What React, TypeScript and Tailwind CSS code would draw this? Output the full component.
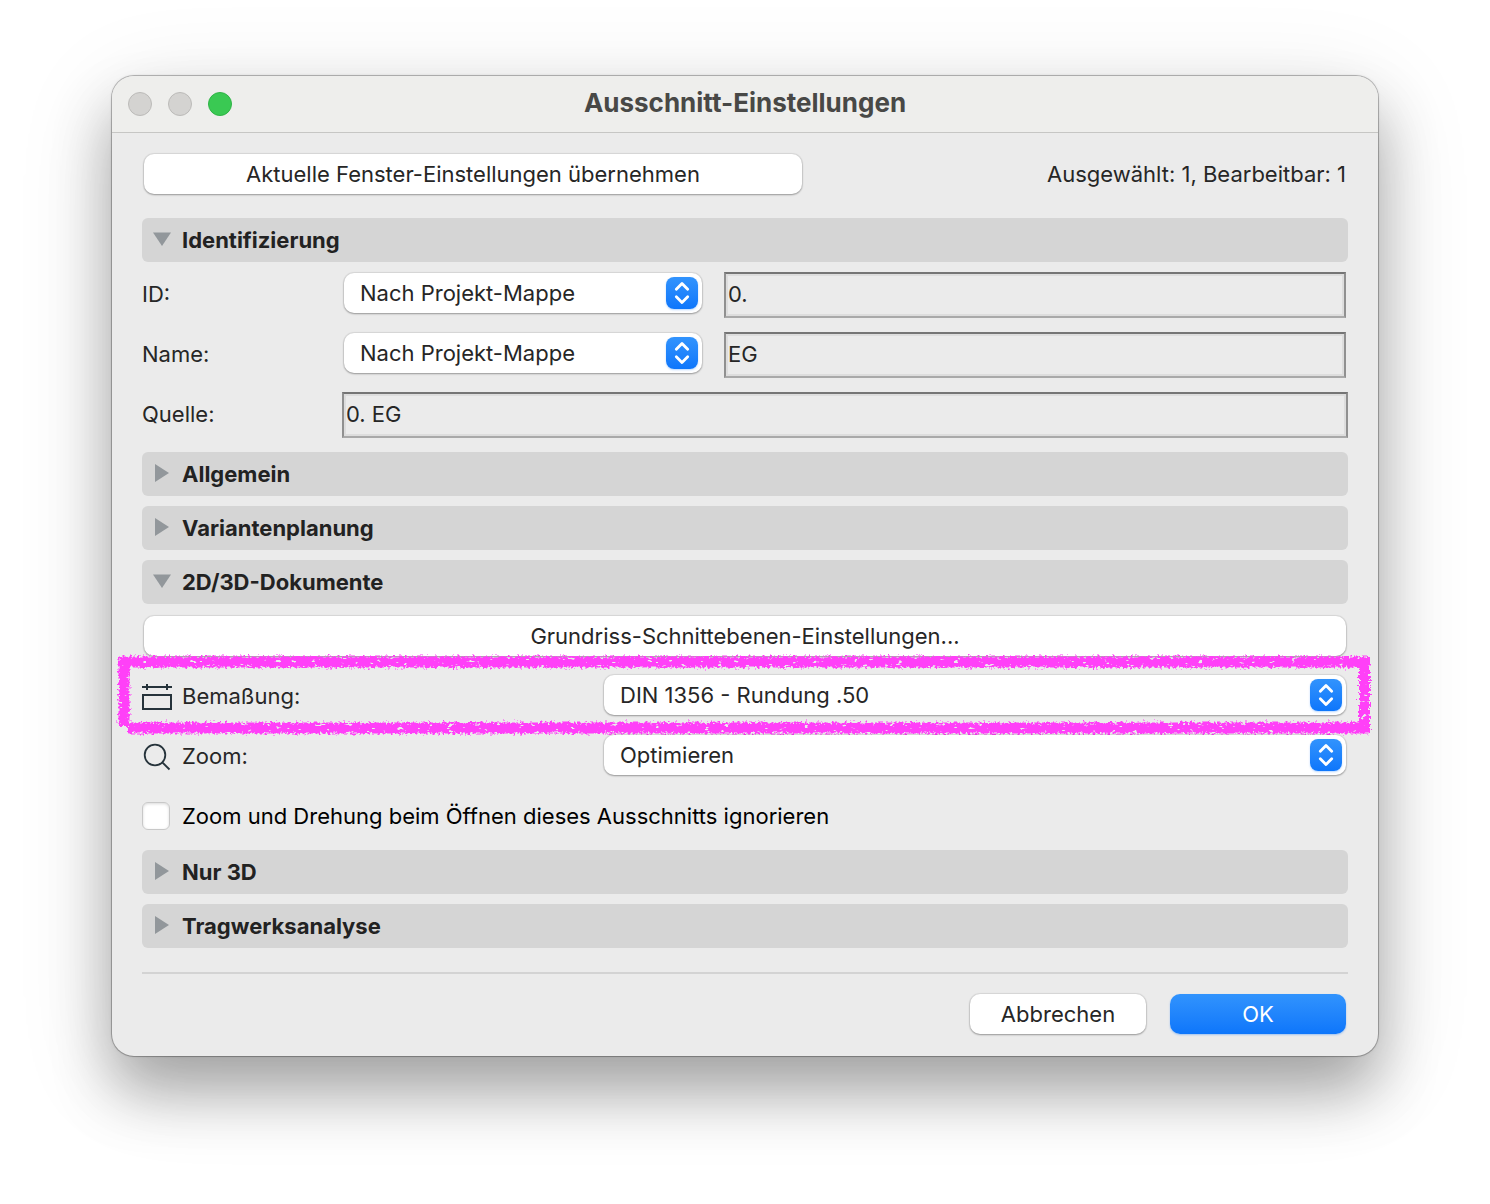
import { useState, type ReactNode } from "react";

interface PopupProps {
  id: string;
  label?: string;
  options: string[];
}

const Popup = ({ id, label, options }: PopupProps) => (
  <div className="relative mb-1 w-full">
    <select
      id={id}
      aria-label={label}
      className="block h-10 w-full appearance-none rounded-[10px] bg-white pr-12 pl-4 text-[22px] leading-7 text-[#262626] shadow-[0_0_1px_1px_rgba(0,0,0,0.08),0_1px_2px_rgba(0,0,0,0.3)]"
    >
      {options.map((option) => (
        <option key={option}>{option}</option>
      ))}
    </select>
    <span className="pointer-events-none absolute top-1 right-1 flex size-8 items-center justify-center rounded-lg bg-linear-to-b from-[#3193fd] to-[#0d76fb] shadow-[0_1px_2px_rgba(13,118,251,0.3)]">
      <svg
        className="size-8"
        viewBox="0 0 32 32"
        fill="none"
        stroke="white"
        strokeWidth="2.8"
        strokeLinecap="round"
        strokeLinejoin="round"
      >
        <path d="M10.3 12.3 16 6.5l5.7 5.8M10.3 19.7l5.7 5.8 5.7-5.8" />
      </svg>
    </span>
  </div>
);

interface FieldProps {
  id: string;
  label?: string;
  value: string;
}

const Field = ({ id, label, value }: FieldProps) => (
  <input
    id={id}
    aria-label={label}
    readOnly
    value={value}
    className="h-[46px] w-full border-2 border-t-[#757575] border-r-[#909090] border-b-[#a9a9a9] border-l-[#909090] bg-[#ebebeb] px-0.5 pb-0.5 text-[22px] leading-7 text-[#262626] shadow-[inset_0_0_0_2px_#dddddd] outline-none"
  />
);

interface SectionProps {
  title: string;
  defaultOpen?: boolean;
  children?: ReactNode;
}

const Section = ({ title, defaultOpen = false, children }: SectionProps) => {
  const [open, setOpen] = useState(defaultOpen);

  return (
    <section>
      <button
        type="button"
        aria-expanded={open}
        onClick={() => setOpen(!open)}
        className="flex h-11 w-full items-center gap-3 rounded-md bg-[#d5d5d5] pl-[10px] text-left text-[22px] leading-7 font-bold text-[#222222]"
      >
        <svg className="mb-0.5 h-5 w-[18px] overflow-visible" viewBox="0 0 18 20" fill="#92979b">
          {open ? <path d="M1 3.5h18L10 17z" /> : <path d="M3 1v18l14-9z" />}
        </svg>
        {title}
      </button>
      {open && children}
    </section>
  );
};

const whiteButton =
  "h-10 rounded-[10px] bg-white text-[22px] leading-7 text-[#262626] shadow-[0_0_1px_1px_rgba(0,0,0,0.08),0_1px_2px_rgba(0,0,0,0.3)]";

/* Marker frame around the dimension row */
const MarkerFrame = () => (
  <svg
    className="pointer-events-none absolute -top-5 -right-6 -bottom-4 -left-6 h-[82px] w-[calc(100%+48px)] overflow-visible"
    aria-hidden="true"
  >
    <defs>
      <filter
        id="crayon"
        filterUnits="userSpaceOnUse"
        x="-10"
        y="-10"
        width="110%"
        height="110"
        colorInterpolationFilters="sRGB"
      >
        <feTurbulence type="fractalNoise" baseFrequency="0.4" numOctaves="2" seed="7" result="noise" />
        <feDisplacementMap
          in="SourceGraphic"
          in2="noise"
          scale="8"
          xChannelSelector="R"
          yChannelSelector="G"
          result="rough"
        />
        <feTurbulence type="fractalNoise" baseFrequency="0.14 0.3" numOctaves="2" seed="3" />
        <feColorMatrix values="0 0 0 0 0  0 0 0 0 0  0 0 0 0 0  14 0 0 0 -3.4" result="grain" />
        <feComposite in="rough" in2="grain" operator="in" />
      </filter>
    </defs>
    <g filter="url(#crayon)" stroke="#ff40f8" strokeWidth="11">
      <line x1="1" y1="8" x2="99.7%" y2="8" />
      <line x1="6" y1="3" x2="6" y2="72" />
      <line x1="10" y1="74" x2="99.8%" y2="74" />
      <line x1="99.4%" y1="3" x2="99.4%" y2="79" />
    </g>
  </svg>
);

const App = () => {
  const [ignoreZoom, setIgnoreZoom] = useState(false);

  return (
    <main className="min-h-screen bg-white px-28 pt-[76px] pb-[148px] font-['Inter','Liberation_Sans',sans-serif] text-[22px] leading-7 text-[#262626]">
      <div className="rounded-[22px] bg-[#ebebeb] shadow-[0_0_0_1px_rgba(0,0,0,0.22),0_0_3px_rgba(0,0,0,0.2),0_20px_100px_rgba(0,0,0,0.12),0_36px_60px_rgba(0,0,0,0.3)]">
        <header className="grid h-[57px] grid-cols-[1fr_auto_1fr] items-center rounded-t-[22px] border-b border-[#c6c6c4] bg-[#eeeeec] px-4">
          <div className="flex gap-4">
            <button type="button" aria-label="Schließen" className="size-6 rounded-full border border-[#bcbbb9] bg-[#d4d3d1]" />
            <button type="button" aria-label="Minimieren" className="size-6 rounded-full border border-[#bcbbb9] bg-[#d4d3d1]" />
            <button type="button" aria-label="Zoomen" className="size-6 rounded-full border border-[#2fb446] bg-[#3ac953]" />
          </div>
          <h1 className="pb-0.5 text-[26px] leading-8 font-bold text-[#484846]">Ausschnitt-Einstellungen</h1>
        </header>

        <div className="px-[30px] pt-[21px] pb-[22px]">
          <div className="flex items-center justify-between px-0.5 pb-6">
            <button type="button" className={`${whiteButton} w-[658px]`}>
              Aktuelle Fenster-Einstellungen übernehmen
            </button>
            <p>Ausgewählt: 1, Bearbeitbar: 1</p>
          </div>

          <div className="flex flex-col gap-[10px]">
            <Section title="Identifizierung" defaultOpen>
              <div className="flex flex-col gap-[14px] pt-[10px] pb-1">
                <div className="flex items-center pr-0.5">
                  <label htmlFor="id-mode" className="w-[202px] shrink-0 pb-0.5">ID:</label>
                  <div className="mr-[22px] w-[358px] shrink-0">
                    <Popup id="id-mode" options={["Nach Projekt-Mappe", "Benutzerdefiniert"]} />
                  </div>
                  <Field id="id-value" label="ID" value="0." />
                </div>
                <div className="flex items-center pr-0.5">
                  <label htmlFor="name-mode" className="w-[202px] shrink-0 pb-0.5">Name:</label>
                  <div className="mr-[22px] w-[358px] shrink-0">
                    <Popup id="name-mode" options={["Nach Projekt-Mappe", "Benutzerdefiniert"]} />
                  </div>
                  <Field id="name-value" label="Name" value="EG" />
                </div>
                <div className="flex items-center">
                  <label htmlFor="source" className="w-[200px] shrink-0 pb-0.5">Quelle:</label>
                  <Field id="source" value="0. EG" />
                </div>
              </div>
            </Section>

            <Section title="Allgemein" />
            <Section title="Variantenplanung" />

            <Section title="2D/3D-Dokumente" defaultOpen>
              <div className="flex flex-col gap-[14px] pt-3">
                <div className="px-0.5 pb-1">
                  <button type="button" className={`${whiteButton} block w-full`}>
                    Grundriss-Schnittebenen-Einstellungen...
                  </button>
                </div>
                <div className="relative flex h-[46px] items-center pr-0.5">
                  <svg className="mr-[10px] size-[30px] shrink-0" viewBox="0 0 30 30" fill="none" stroke="#26333b" strokeWidth="2">
                    <path d="M0 5h30M5 2v6M25 2v6M1 13h28v14H1z" />
                  </svg>
                  <label htmlFor="dimension" className="w-[422px] shrink-0 pb-0.5">Bemaßung:</label>
                  <Popup id="dimension" options={["DIN 1356 - Rundung .50", "DIN 1356 - Rundung .25"]} />
                  <MarkerFrame />
                </div>
                <div className="flex h-[46px] items-center pr-0.5">
                  <svg className="mr-[10px] size-[30px] shrink-0" viewBox="0 0 30 30" fill="none" stroke="#26333b" strokeWidth="1.8">
                    <circle cx="13" cy="13" r="10.3" />
                    <path d="m20.3 20.3 7.2 7.2" />
                  </svg>
                  <label htmlFor="zoom" className="w-[422px] shrink-0 pb-0.5">Zoom:</label>
                  <Popup id="zoom" options={["Optimieren", "Aktueller Zoom"]} />
                </div>
                <div className="flex h-[46px] items-center gap-3 pb-0.5">
                  <input
                    id="ignore-zoom"
                    type="checkbox"
                    checked={ignoreZoom}
                    onChange={() => setIgnoreZoom(!ignoreZoom)}
                    className="size-7 appearance-none rounded-md border border-[#c8c8c8] bg-white shadow-[inset_0_1px_3px_rgba(0,0,0,0.15)] checked:bg-[#0d76fb]"
                  />
                  <label htmlFor="ignore-zoom" className="text-black">
                    Zoom und Drehung beim Öffnen dieses Ausschnitts ignorieren
                  </label>
                </div>
              </div>
            </Section>

            <Section title="Nur 3D" />
            <Section title="Tragwerksanalyse" />
          </div>

          <footer className="mt-6 flex justify-end gap-6 border-t-2 border-[#d3d3d3] pt-5 pr-0.5">
            <button type="button" className={`${whiteButton} w-44`}>
              Abbrechen
            </button>
            <button
              type="button"
              className="h-10 w-44 rounded-[10px] bg-linear-to-b from-[#3193fd] to-[#0d76fb] text-white shadow-[0_1px_2px_rgba(13,118,251,0.35)]"
            >
              OK
            </button>
          </footer>
        </div>
      </div>
    </main>
  );
};

export default App;
